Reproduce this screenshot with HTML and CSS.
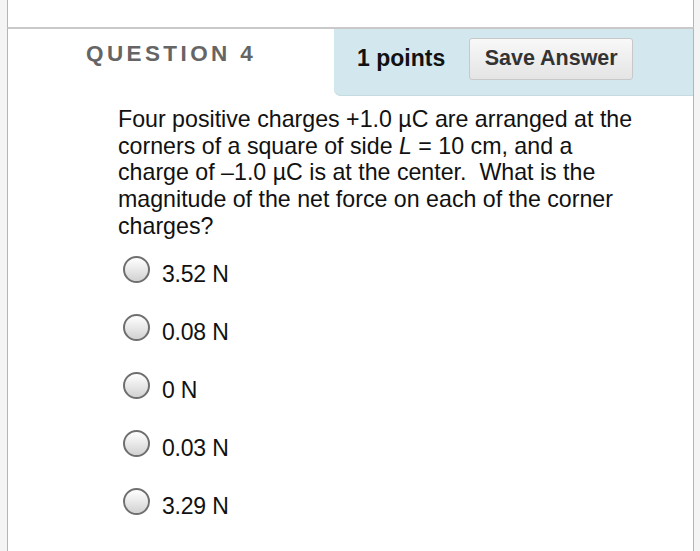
FILE: index.html
```html
<!DOCTYPE html>
<html>
<head>
<meta charset="utf-8">
<link rel="stylesheet" href="styles.css">
</head>
<body>
<div class="page">
  <div class="top-space"></div>
  <div class="panel">
    <div class="header">
      <div class="qtitle">QUESTION 4</div>
      <div class="pointsbar">
        <span class="points">1 points</span>
        <button class="save">Save Answer</button>
      </div>
    </div>
    <div class="body">
      <p class="question">Four positive charges +1.0 µC are arranged at the corners of a square of side <i>L</i> = 10 cm, and a charge of –1.0 µC is at the center.&nbsp; What is the magnitude of the net force on each of the corner charges?</p>
      <ul class="options">
        <li><span class="radio"></span><span class="opt">3.52 N</span></li>
        <li><span class="radio"></span><span class="opt">0.08 N</span></li>
        <li><span class="radio"></span><span class="opt">0 N</span></li>
        <li><span class="radio"></span><span class="opt">0.03 N</span></li>
        <li><span class="radio"></span><span class="opt">3.29 N</span></li>
      </ul>
    </div>
  </div>
</div>
</body>
</html>
```
FILE: styles.css
```css
html, body {
  margin: 0;
  padding: 0;
  background: #f4f4f4;
  font-family: "Liberation Sans", Arial, sans-serif;
}
.page {
  width: 700px;
  height: 551px;
  overflow: hidden;
  padding: 0 6px 0 7px;
  box-sizing: border-box;
}
.top-space {
  height: 27px;
  background: #fff;
  border-left: 1px solid #b5b5b5;
  border-right: 1px solid #b5b5b5;
}
.panel {
  background: #fff;
  border-top: 2px solid #c9c9c9;
  border-left: 1px solid #b5b5b5;
  border-right: 1px solid #b5b5b5;
  height: 530px;
}
.header {
  display: flex;
  height: 67px;
}
.qtitle {
  box-sizing: border-box;
  width: 326px;
  flex: none;
  padding-left: 78px;
  padding-top: 12px;
  font-size: 22.5px;
  font-weight: bold;
  letter-spacing: 3.4px;
  color: #656565;
  white-space: nowrap;
}
.pointsbar {
  flex: 1;
  background: #d3e8ee;
  border-bottom-left-radius: 7px;
  display: flex;
  align-items: center;
  padding-left: 23px;
  box-shadow: inset 0 -1px 0 #c4dbe2;
  white-space: nowrap;
}
.points {
  font-size: 23px;
  font-weight: bold;
  color: #111;
  margin-top: -8px;
}
.save {
  margin-left: 24px;
  margin-top: -8px;
  width: 164px;
  height: 42px;
  flex: none;
  border: 1px solid #c8c8c8;
  border-radius: 3px;
  background: linear-gradient(#f8f8f8, #e4e4e4);
  font-family: "Liberation Sans", Arial, sans-serif;
  font-size: 21.5px;
  font-weight: bold;
  color: #333;
  padding: 0;
}
.body {
  padding-left: 110px;
}
.question {
  margin: 10px 0 0;
  width: 525px;
  font-size: 23.2px;
  line-height: 26.7px;
  color: #111;
}
.question i {
  font-style: italic;
}
.options {
  list-style: none;
  margin: 6px 0 0;
  padding: 0 0 0 5px;
}
.options li {
  display: flex;
  align-items: center;
  height: 58px;
}
.radio {
  width: 27px;
  height: 27px;
  box-sizing: border-box;
  border: 2px solid #6f6f6f;
  border-radius: 50%;
  background: linear-gradient(#ffffff, #d2d2d2);
  margin-right: 12px;
  margin-top: -10px;
}
.opt {
  font-size: 23px;
  color: #111;
  letter-spacing: -0.2px;
}
```
